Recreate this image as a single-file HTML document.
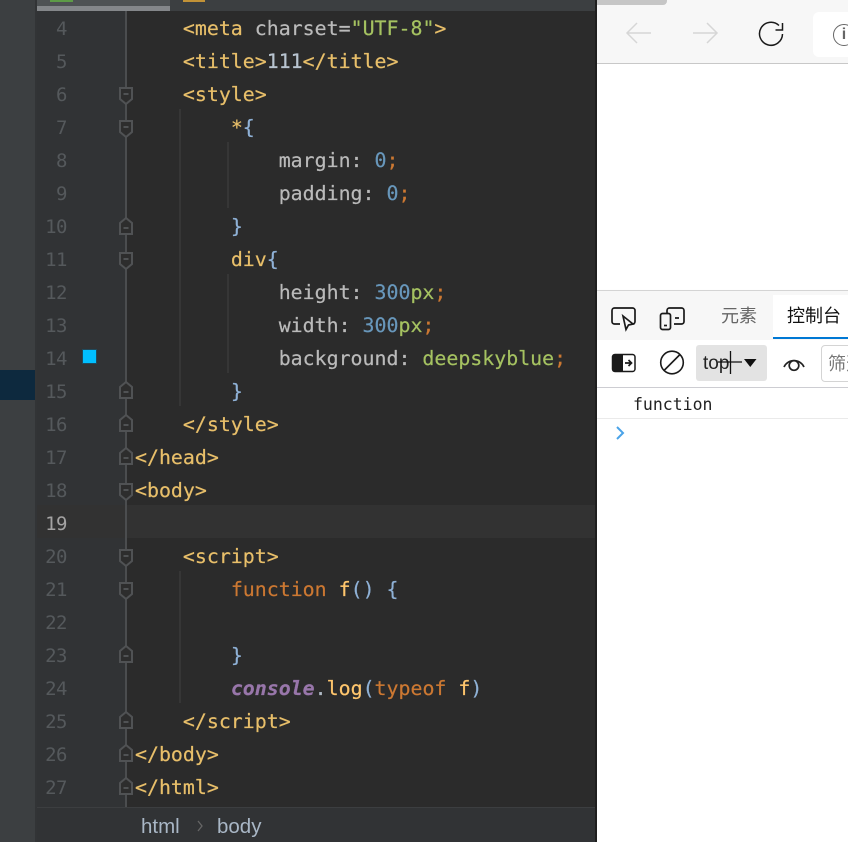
<!DOCTYPE html>
<html lang="zh"><head><meta charset="utf-8"><title>Editor</title>
<style>
*{margin:0;padding:0;box-sizing:border-box}
html,body{width:848px;height:842px;overflow:hidden;background:#fff}
body{position:relative;font-family:"Liberation Sans","Noto Sans CJK SC",sans-serif}
.a{position:absolute}
.l{position:absolute;left:135px;height:33px;white-space:pre;font:19.9px/33px "DejaVu Sans Mono",monospace;color:#b8c4d0;-webkit-text-stroke:.2px}
.n{position:absolute;left:37px;width:30px;text-align:right;height:33px;margin-top:1px;font:19px/33px "DejaVu Sans Mono",monospace;color:#55595c;letter-spacing:-.5px}
.t{color:#e8bf6a}.p{color:#bababa}.s{color:#a5c261}.d{color:#6897bb}.k{color:#cc7832}.b{color:#8fb1d6}.f{color:#ffc66d}.w{color:#b0bac5}
.c{color:#9876aa;font-style:italic;font-weight:bold}
.g{position:absolute;width:2px;background:#363636}
</style></head><body>
<div class="a" style="left:0;top:0;width:37px;height:842px;background:#3c3f41"></div>
<div class="a" style="left:35px;top:0;width:2px;height:842px;background:#323436"></div>
<div class="a" style="left:0;top:370px;width:35px;height:30px;background:#0d293e"></div>
<div class="a" style="left:37px;top:0;width:90px;height:842px;background:#313335"></div>
<div class="a" style="left:127px;top:0;width:468px;height:842px;background:#2b2b2b"></div>
<div class="a" style="left:37px;top:505px;width:558px;height:33px;background:#323232"></div>
<div class="a" style="left:37px;top:0;width:558px;height:11px;background:#3c3f41"></div>
<div class="a" style="left:37px;top:0;width:133px;height:6px;background:#4e5254"></div>
<div class="a" style="left:37px;top:6px;width:133px;height:5px;background:#84878a"></div>
<div class="a" style="left:50px;top:0;width:23px;height:2px;background:#5d9b47"></div>
<div class="a" style="left:183px;top:0;width:22px;height:2px;background:#c29237"></div>
<div class="a" style="left:125px;top:11px;width:2px;height:796px;background:#4b4d4f"></div>
<div class="g" style="left:179px;top:109px;height:297px"></div>
<div class="g" style="left:227px;top:142px;height:66px"></div>
<div class="g" style="left:227px;top:274px;height:99px"></div>
<div class="g" style="left:179px;top:571px;height:132px"></div>
<div class="n" style="top:12px">4</div><div class="n" style="top:45px">5</div><div class="n" style="top:78px">6</div><div class="n" style="top:111px">7</div><div class="n" style="top:144px">8</div><div class="n" style="top:177px">9</div><div class="n" style="top:210px">10</div><div class="n" style="top:243px">11</div><div class="n" style="top:276px">12</div><div class="n" style="top:309px">13</div><div class="n" style="top:342px">14</div><div class="n" style="top:375px">15</div><div class="n" style="top:408px">16</div><div class="n" style="top:441px">17</div><div class="n" style="top:474px">18</div><div class="n" style="top:507px;color:#a4a3a3">19</div><div class="n" style="top:540px">20</div><div class="n" style="top:573px">21</div><div class="n" style="top:606px">22</div><div class="n" style="top:639px">23</div><div class="n" style="top:672px">24</div><div class="n" style="top:705px">25</div><div class="n" style="top:738px">26</div><div class="n" style="top:771px">27</div>
<div class="a" style="left:82px;top:349px;width:15px;height:15px;background:#00bfff;border:1px solid #1f4a5c"></div>
<svg class="a" style="left:118px;top:0" width="18" height="842" fill="#2d2d2d" stroke="#505254" stroke-width="2">
<path d="M2 88h12v11l-6 5-6-5zM5.500 94h5"/><path d="M2 121h12v11l-6 5-6-5zM5.500 127h5"/><path d="M2 253h12v11l-6 5-6-5zM5.500 259h5"/><path d="M2 484h12v11l-6 5-6-5zM5.500 490h5"/><path d="M2 550h12v11l-6 5-6-5zM5.500 556h5"/><path d="M2 583h12v11l-6 5-6-5zM5.500 589h5"/>
<path d="M2 234h12v-11l-6-5-6 5zM5.500 228h5"/><path d="M2 398h12v-11l-6-5-6 5zM5.500 392h5"/><path d="M2 431h12v-11l-6-5-6 5zM5.500 425h5"/><path d="M2 464h12v-11l-6-5-6 5zM5.500 458h5"/><path d="M2 662h12v-11l-6-5-6 5zM5.500 656h5"/><path d="M2 728h12v-11l-6-5-6 5zM5.500 722h5"/><path d="M2 761h12v-11l-6-5-6 5zM5.500 755h5"/><path d="M2 794h12v-11l-6-5-6 5zM5.500 788h5"/>
</svg>
<div class="l" style="top:12px">    <span class="t">&lt;meta</span> <span class="p">charset=</span><span class="s">"UTF-8"</span><span class="t">&gt;</span></div>
<div class="l" style="top:45px">    <span class="t">&lt;title&gt;</span>111<span class="t">&lt;/title&gt;</span></div>
<div class="l" style="top:78px">    <span class="t">&lt;style&gt;</span></div>
<div class="l" style="top:111px">        <span class="t">*</span><span class="b">{</span></div>
<div class="l" style="top:144px">            <span class="p">margin: </span><span class="d">0</span><span class="k">;</span></div>
<div class="l" style="top:177px">            <span class="p">padding: </span><span class="d">0</span><span class="k">;</span></div>
<div class="l" style="top:210px">        <span class="b">}</span></div>
<div class="l" style="top:243px">        <span class="t">div</span><span class="b">{</span></div>
<div class="l" style="top:276px">            <span class="p">height: </span><span class="d">300</span><span class="s">px</span><span class="k">;</span></div>
<div class="l" style="top:309px">            <span class="p">width: </span><span class="d">300</span><span class="s">px</span><span class="k">;</span></div>
<div class="l" style="top:342px">            <span class="p">background: </span><span class="s">deepskyblue</span><span class="k">;</span></div>
<div class="l" style="top:375px">        <span class="b">}</span></div>
<div class="l" style="top:408px">    <span class="t">&lt;/style&gt;</span></div>
<div class="l t" style="top:441px">&lt;/head&gt;</div>
<div class="l t" style="top:474px">&lt;body&gt;</div>
<div class="l" style="top:540px">    <span class="t">&lt;script&gt;</span></div>
<div class="l" style="top:573px">        <span class="k">function</span> <span class="f">f</span><span class="b">() {</span></div>
<div class="l" style="top:639px">        <span class="b">}</span></div>
<div class="l" style="top:672px">        <span class="c">console</span><span class="w">.</span><span class="f">log</span><span class="b">(</span><span class="k">typeof</span> <span class="f">f</span><span class="b">)</span></div>
<div class="l" style="top:705px">    <span class="t">&lt;/script&gt;</span></div>
<div class="l t" style="top:738px">&lt;/body&gt;</div>
<div class="l t" style="top:771px">&lt;/html&gt;</div>
<div class="a" style="left:37px;top:807px;width:558px;height:35px;background:#313335;border-top:1px solid #3c3e40"></div>
<div class="a" style="left:141px;top:814px;font:20.500px/26px 'Liberation Sans',sans-serif;color:#a9b7c6">html</div>
<svg class="a" style="left:196px;top:820px" width="8" height="12" fill="none" stroke="#666" stroke-width="1.300"><path d="M2 1l4 5-4 5"/></svg>
<div class="a" style="left:217px;top:814px;font:20.500px/26px 'Liberation Sans',sans-serif;color:#a9b7c6">body</div>
<div class="a" style="left:595px;top:0;width:2px;height:842px;background:#1f1f1f"></div>
<div class="a" style="left:597px;top:0;width:251px;height:64px;background:#f7f7f7;border-bottom:1px solid #c8c8c8"></div>
<div class="a" style="left:597px;top:0;width:70px;height:5px;background:#c6c6c6;border-radius:0 0 4px 0"></div>
<svg class="a" style="left:625px;top:18px" width="160" height="32" fill="none" stroke-width="1.500"><path d="M2 15h24M12 5L2 15l10 10" stroke="#d6d6d6"/><path d="M68 15h24M82 5l10 10-10 10" stroke="#d6d6d6"/><path d="M154 7.500A11.500 11.500 0 1 0 157.500 16" stroke="#1a1a1a"/><path d="M157.500 5v7h-7" stroke="#1a1a1a"/></svg>
<div class="a" style="left:813px;top:12px;width:35px;height:45px;background:#fff;border-radius:6px 0 0 6px"></div>
<div class="a" style="left:833px;top:24px;width:22px;height:22px;border:1.500px solid #666;border-radius:50%;font:bold 16px/19px 'Liberation Sans',sans-serif;text-align:center;color:#666">i</div>
<div class="a" style="left:597px;top:290px;width:251px;height:50px;background:#f7f7f7;border-top:1px solid #d4d4d4;box-shadow:0 1px 2px rgba(0,0,0,.06)"></div>
<div class="a" style="left:773px;top:295px;width:75px;height:44px;background:#fff;border-bottom:2px solid #0078d4"></div>
<div class="a" style="left:721px;top:304px;font-size:18px;line-height:25px;color:#666">元素</div>
<div class="a" style="left:787px;top:304px;font-size:18px;line-height:25px;color:#111">控制台</div>
<svg class="a" style="left:610px;top:305px" width="80" height="28" fill="none" stroke="#1a1a1a" stroke-width="1.700"><path d="M10 19H4.500A2.500 2.500 0 0 1 2 16.500v-11A2.500 2.500 0 0 1 4.500 3h18A2.500 2.500 0 0 1 25 5.500v11a2.500 2.500 0 0 1-2.500 2.500H21"/><path d="M13 11l10 8-4.500 1-2.500 4.500z"/><path d="M57 8V5.500A2.500 2.500 0 0 1 59.500 3h14.500A2.500 2.500 0 0 1 73.500 3h0a0 0 0 0 1 0 0" stroke="none"/><path d="M57 8V5.500A2.500 2.500 0 0 1 59.500 3h12A2.500 2.500 0 0 1 74 5.500v11a2.500 2.500 0 0 1-2.500 2.500H64M65 13h4"/><rect x="50.500" y="8.500" width="10" height="16" rx="2"/><path d="M54 20.500h3"/></svg>
<div class="a" style="left:597px;top:340px;width:251px;height:48px;background:#fff;border-bottom:1px solid #cdcdd2"></div>
<svg class="a" style="left:610px;top:350px" width="76" height="28"><rect x="2.500" y="4.500" width="22.500" height="17" rx="2.500" fill="#fff" stroke="#1a1a1a" stroke-width="1.500"/><path d="M2 6.500A2.500 2.500 0 0 1 4.500 4H13v18H4.500A2.500 2.500 0 0 1 2 19.500z" fill="#1a1a1a"/><path d="M15 13h6M18.500 10l3 3-3 3" fill="none" stroke="#1a1a1a" stroke-width="1.700"/><circle cx="62" cy="12.500" r="11.300" fill="none" stroke="#1a1a1a" stroke-width="1.600"/><path d="M54 20.500L70 4.500" stroke="#1a1a1a" stroke-width="1.600"/></svg>
<div class="a" style="left:696px;top:345px;width:71px;height:36px;background:#e3e3e3;border-radius:3px"></div>
<div class="a" style="left:703px;top:352px;font-size:19px;line-height:24px;color:#222">top</div>
<svg class="a" style="left:718px;top:350px" width="100" height="28" fill="none"><path d="M0 12h24M12.500 1v23" stroke="#111" stroke-width="1.300"/><path d="M26 9h12.500l-6.250 8z" fill="#111"/><path d="M66 17a11 11 0 0 1 20 0" stroke="#222" stroke-width="1.700"/><circle cx="76" cy="15.500" r="4.800" stroke="#222" stroke-width="1.700"/></svg>
<div class="a" style="left:821px;top:345px;width:40px;height:37px;border:1px solid #d4d4d4;border-radius:4px;background:#fff"></div>
<div class="a" style="left:828px;top:352px;width:20px;overflow:hidden;white-space:nowrap;font-size:18px;line-height:25px;color:#777">筛选</div>
<div class="a" style="left:633px;top:394px;font:16.500px/22px 'DejaVu Sans Mono',monospace;color:#222">function</div>
<div class="a" style="left:597px;top:418px;width:251px;height:1px;background:#eaeaea"></div>
<svg class="a" style="left:615px;top:426px" width="12" height="14" fill="none" stroke="#4aa3e8" stroke-width="2"><path d="M2 1l6 6-6 6"/></svg>
</body></html>
